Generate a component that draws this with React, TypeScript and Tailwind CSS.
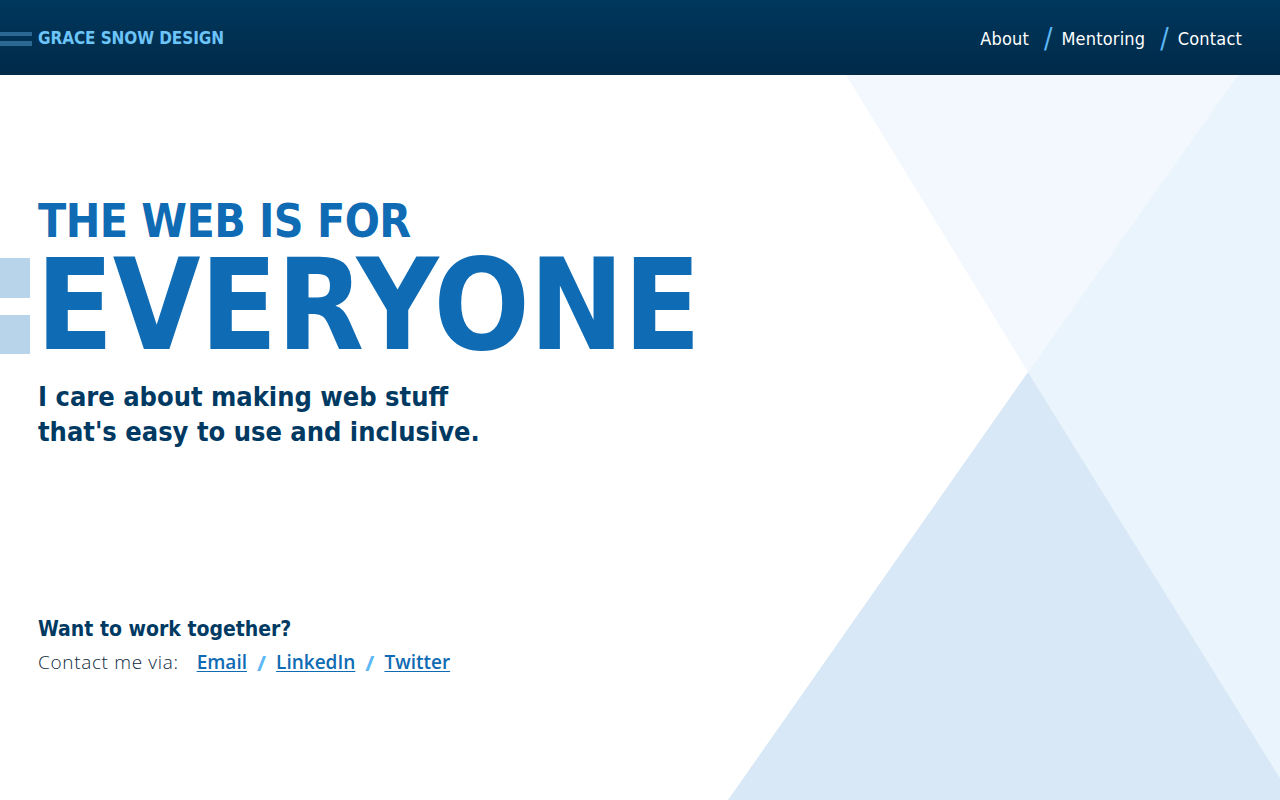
import React from 'react'

const HEAD = { fontFamily: '"Liberation Sans Narrow", "DejaVu Sans Condensed", "Liberation Sans", sans-serif' }
const BODY = { fontFamily: '"Open Sans", "Liberation Sans", Arial, sans-serif' }

const NAV = ['About', 'Mentoring', 'Contact']
const LINKS = ['Email', 'LinkedIn', 'Twitter']

function Backdrop() {
  return (
    <svg className="pointer-events-none absolute inset-0 h-full w-full" viewBox="0 0 1280 725" preserveAspectRatio="none">
      <polygon points="846,0 1238,0 1028,297" fill="#f2f8fd" />
      <polygon points="1238,0 1280,0 1280,703 1028,297" fill="#eaf4fc" />
      <polygon points="1028,297 1280,703 1280,725 728,725" fill="#d8e8f6" />
    </svg>
  )
}

function Slash({ className }: { className: string }) {
  return <span className={className}>/</span>
}

export default function App() {
  return (
    <div className="flex h-[800px] w-[1280px] flex-col overflow-hidden bg-white">
      <header className="flex h-[75px] shrink-0 items-center justify-between bg-gradient-to-b from-[#00375d] to-[#002a48] pr-[38px]" style={HEAD}>
        <div className="flex items-center gap-[6px] pt-[2px]">
          <div className="flex flex-col gap-[5px]">
            <div className="h-[4px] w-[32px] bg-[#2b6894]" />
            <div className="h-[5px] w-[32px] bg-[#2b6894]" />
          </div>
          <span className="text-[17px] font-bold tracking-[-0.005em] text-[#6cc4f8]">GRACE SNOW DESIGN</span>
        </div>
        <nav className="flex items-center pt-[2px] text-[18px] text-white">
          {NAV.map((n, i) => (
            <React.Fragment key={n}>
              {i > 0 && <Slash className="ml-[15px] mr-[9px] text-[28px] leading-none text-[#5bb8f5]" />}
              <a className="tracking-[0.01em]">{n}</a>
            </React.Fragment>
          ))}
        </nav>
      </header>

      <main className="relative flex-1">
        <Backdrop />
        <div className="relative pt-[121px]">
          <h1 className="pl-[38px] text-[#0f6bb3]" style={HEAD}>
            <span className="block text-[46px] font-bold leading-[50px] tracking-[-0.012em]">THE WEB IS FOR</span>
            <span className="flex items-center pt-[4px]">
              <span className="-ml-[38px] mr-[6px] flex flex-col gap-[17px]">
                <span className="block h-[40px] w-[30px] bg-[#b8d4ea]" />
                <span className="block h-[39px] w-[30px] bg-[#b8d4ea]" />
              </span>
              <span className="block text-[126px] font-bold leading-[112px] tracking-[-0.005em]">EVERYONE</span>
            </span>
          </h1>
          <p className="mt-[17px] pl-[38px] text-[27px] font-bold leading-[35px] text-[#003a63]" style={HEAD}>
            I care about making web stuff
            <br />
            that's easy to use and inclusive.
          </p>

          <div className="mt-[165px] pl-[38px]">
            <h2 className="text-[21px] font-bold text-[#003a63]" style={HEAD}>Want to work together?</h2>
            <div className="flex items-center text-[19px]" style={BODY}>
              <span className="mr-[18px] font-light tracking-[0.035em] text-[#0f2a40]">Contact me via:</span>
              {LINKS.map((l, i) => (
                <React.Fragment key={l}>
                  {i > 0 && <Slash className="mx-[10px] text-[22px] font-bold text-[#5bb8f5]" />}
                  <a className="font-semibold text-[#0f6bb3] underline underline-offset-2">{l}</a>
                </React.Fragment>
              ))}
            </div>
          </div>
        </div>
      </main>
    </div>
  )
}
